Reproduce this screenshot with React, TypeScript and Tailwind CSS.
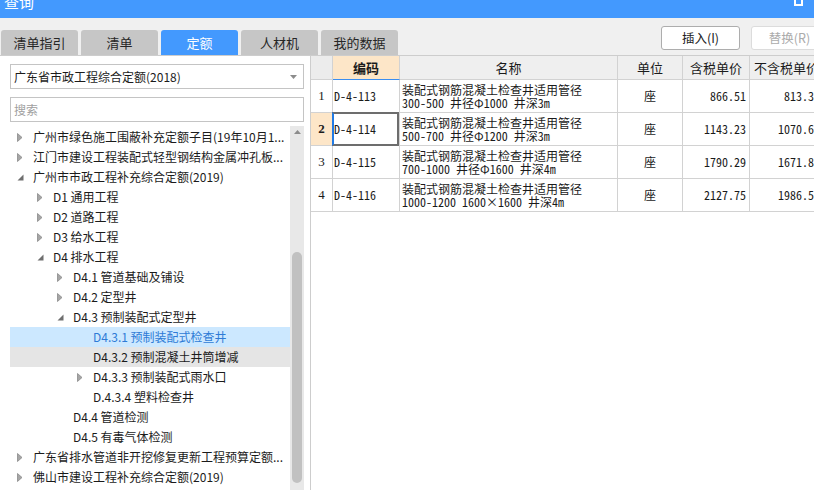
import React from "react";

const UI = "'Noto Sans CJK SC', 'Noto Sans', sans-serif";
const MONO = "'Noto Sans Mono CJK SC', 'Liberation Mono', 'Noto Sans CJK SC', monospace";

type Node = { level: number; label: string; arrow: "c" | "e" | "n"; state?: "sel" | "hov" };

const tree: Node[] = [
  { level: 0, label: "广州市绿色施工围蔽补充定额子目(19年10月1...", arrow: "c" },
  { level: 0, label: "江门市建设工程装配式轻型钢结构金属冲孔板...", arrow: "c" },
  { level: 0, label: "广州市市政工程补充综合定额(2019)", arrow: "e" },
  { level: 1, label: "D1 通用工程", arrow: "c" },
  { level: 1, label: "D2 道路工程", arrow: "c" },
  { level: 1, label: "D3 给水工程", arrow: "c" },
  { level: 1, label: "D4 排水工程", arrow: "e" },
  { level: 2, label: "D4.1 管道基础及铺设", arrow: "c" },
  { level: 2, label: "D4.2 定型井", arrow: "c" },
  { level: 2, label: "D4.3 预制装配式定型井", arrow: "e" },
  { level: 3, label: "D4.3.1 预制装配式检查井", arrow: "n", state: "sel" },
  { level: 3, label: "D4.3.2 预制混凝土井筒增减", arrow: "n", state: "hov" },
  { level: 3, label: "D4.3.3 预制装配式雨水口", arrow: "c" },
  { level: 3, label: "D.4.3.4 塑料检查井", arrow: "n" },
  { level: 2, label: "D4.4 管道检测", arrow: "n" },
  { level: 2, label: "D4.5 有毒气体检测", arrow: "n" },
  { level: 0, label: "广东省排水管道非开挖修复更新工程预算定额...", arrow: "c" },
  { level: 0, label: "佛山市建设工程补充综合定额(2019)", arrow: "c" },
];

const rows = [
  { n: "1", code: "D-4-113", l1: "装配式钢筋混凝土检查井适用管径", l2: "300-500 井径Φ1000 井深3m", p1: "866.51", p2: "813.35" },
  { n: "2", code: "D-4-114", l1: "装配式钢筋混凝土检查井适用管径", l2: "500-700 井径Φ1200 井深3m", p1: "1143.23", p2: "1070.67" },
  { n: "3", code: "D-4-115", l1: "装配式钢筋混凝土检查井适用管径", l2: "700-1000 井径Φ1600 井深4m", p1: "1790.29", p2: "1671.81" },
  { n: "4", code: "D-4-116", l1: "装配式钢筋混凝土检查井适用管径", l2: "1000-1200 1600×1600 井深4m", p1: "2127.75", p2: "1986.56" },
];

function Arrow({ kind }: { kind: "c" | "e" | "n" }) {
  if (kind === "n") return <span className="w-[16px] shrink-0" />;
  return (
    <span className="w-[16px] shrink-0 flex items-center justify-start">
      {kind === "c" ? (
        <svg width="6" height="9" viewBox="0 0 6 9">
          <path d="M0.5 0.5 L5 4.5 L0.5 8.5 Z" fill="#a6a6a6" stroke="#8a8a8a" strokeWidth="0.8" />
        </svg>
      ) : (
        <svg width="7" height="7" viewBox="0 0 7 7">
          <path d="M6.5 0.5 L6.5 6.5 L0.5 6.5 Z" fill="#6e6e6e" />
        </svg>
      )}
    </span>
  );
}

const tabs = ["清单指引", "清单", "定额", "人材机", "我的数据"];

export default function App() {
  return (
    <div
      className="w-[814px] h-[490px] overflow-hidden bg-[#f0f0f0] flex flex-col text-[#1b1b1b]"
      style={{ fontFamily: UI }}
    >
      {/* title bar */}
      <div className="h-[18px] bg-[#4399fe] relative shrink-0 overflow-hidden">
        <div className="absolute left-[4px] top-[-7px] text-white text-[15px] leading-[18px]">查询</div>
        <div className="absolute left-[794px] top-[-3px] w-[9px] h-[9px] border-2 border-white" />
      </div>

      {/* toolbar */}
      <div className="h-[37px] shrink-0 flex justify-between">
        <div className="flex items-end gap-[3px] pl-[1px]">
          {tabs.map((t) => (
            <div
              key={t}
              className={
                "w-[77px] h-[25px] rounded-t-[3px] flex items-center justify-center text-[13px] " +
                (t === "定额" ? "bg-[#4399fe] text-white" : "bg-[#c6c6c6] text-[#262626]")
              }
            >
              {t}
            </div>
          ))}
        </div>
        <div className="flex items-start gap-[11px] pt-[8px] mr-[-14px]">
          <div className="w-[79px] h-[24px] bg-white border border-[#adadad] rounded-[3px] flex items-center justify-center text-[12.5px] text-[#222]">
            插入(I)
          </div>
          <div className="w-[77px] h-[24px] bg-white border border-[#dcdcdc] rounded-[3px] flex items-center justify-center text-[12.5px] text-[#ababab]">
            替换(R)
          </div>
        </div>
      </div>

      {/* main */}
      <div className="flex-1 flex border-t border-[#cdcdcd] min-h-0">
        {/* left panel */}
        <div className="w-[311px] shrink-0 bg-white border-r border-[#cdcdcd] pl-[10px] pt-[8px] flex flex-col">
          <div className="w-[294px] h-[25px] border border-[#c4c4c4] flex items-center justify-between pl-[3px] pr-[6px] text-[12px]">
            <span>广东省市政工程综合定额(2018)</span>
            <svg width="7" height="4" viewBox="0 0 7 4">
              <path d="M0 0 L7 0 L3.5 4 Z" fill="#8c8c8c" />
            </svg>
          </div>
          <div className="w-[294px] h-[25px] mt-[8px] border border-[#c4c4c4] flex items-center pl-[3px] text-[12px] text-[#a0a0a0]">
            搜索
          </div>
          <div className="flex mt-[4px] flex-1 min-h-0">
            <div className="w-[280px] pt-[1px]">
              {tree.map((n, i) => (
                <div
                  key={i}
                  className={
                    "h-[20px] flex items-center text-[12px] whitespace-nowrap " +
                    (n.state === "sel"
                      ? "bg-[#cce8ff] text-[#2e7bd6]"
                      : n.state === "hov"
                      ? "bg-[#e5e5e5]"
                      : "")
                  }
                  style={{ paddingLeft: 7 + n.level * 20 }}
                >
                  <Arrow kind={n.arrow} />
                  <span className="overflow-hidden" style={{ maxWidth: 256 - n.level * 20 }}>
                    {n.label}
                  </span>
                </div>
              ))}
            </div>
            <div className="w-[14px] bg-[#e8e8e8] relative flex flex-col items-center">
              <svg className="mt-[4px]" width="7" height="4" viewBox="0 0 7 4">
                <path d="M0 4 L7 4 L3.5 0 Z" fill="#8c8c8c" />
              </svg>
              <div className="absolute left-[2px] top-[126px] w-[10px] h-[231px] rounded-full bg-[#c1c1c1]" />
            </div>
          </div>
        </div>

        {/* right table */}
        <div className="flex-1 bg-white overflow-hidden">
          <div className="w-[560px] grid grid-cols-[22px_67px_218px_65px_67px_74px] text-[12px]">
            {/* header */}
            <div className="h-[24px] bg-[#ececec] border-r border-b border-[#d2d2d2]" />
            <div className="h-[24px] bg-[#fde6c8] border-r border-[#d2d2d2] border-b border-b-[#3b8ef0] flex items-center justify-center font-bold text-[13px]">
              编码
            </div>
            {["名称", "单位", "含税单价", "不含税单价"].map((h) => (
              <div
                key={h}
                className="h-[24px] bg-[#efefef] border-r border-b border-[#d2d2d2] flex items-center justify-center text-[13px] whitespace-nowrap overflow-hidden"
              >
                {h}
              </div>
            ))}
            {rows.map((r) => {
              const sel = r.n === "2";
              return (
                <React.Fragment key={r.n}>
                  <div
                    className={
                      "h-[33px] border-r border-b border-[#d2d2d2] flex items-center justify-center text-[13px] " +
                      (sel ? "bg-[#fde6c8] font-bold" : "")
                    }
                    style={{ fontFamily: "'Liberation Serif', serif" }}
                  >
                    {r.n}
                  </div>
                  <div
                    className="h-[33px] border-r border-b border-[#d2d2d2] flex items-center pl-[1px] relative"
                    style={{ fontFamily: MONO }}
                  >
                    {r.code}
                    {sel && (
                      <div className="absolute left-[-1px] top-[-1px] w-[67px] h-[34px] border-2 border-[#6d6d6d] border-l-[#1f7ae6]" />
                    )}
                  </div>
                  <div
                    className="h-[33px] border-r border-b border-[#d2d2d2] flex flex-col justify-center pl-[2px] leading-[13px] whitespace-nowrap overflow-hidden"
                    style={{ fontFamily: MONO }}
                  >
                    <div>{r.l1}</div>
                    <div>{r.l2}</div>
                  </div>
                  <div
                    className="h-[33px] border-r border-b border-[#d2d2d2] flex items-center justify-center"
                    style={{ fontFamily: MONO }}
                  >
                    座
                  </div>
                  <div
                    className="h-[33px] border-r border-b border-[#d2d2d2] flex items-center justify-end pr-[3px]"
                    style={{ fontFamily: MONO }}
                  >
                    {r.p1}
                  </div>
                  <div
                    className="h-[33px] border-r border-b border-[#d2d2d2] flex items-center justify-end pr-[3px]"
                    style={{ fontFamily: MONO }}
                  >
                    {r.p2}
                  </div>
                </React.Fragment>
              );
            })}
          </div>
        </div>
      </div>
    </div>
  );
}
